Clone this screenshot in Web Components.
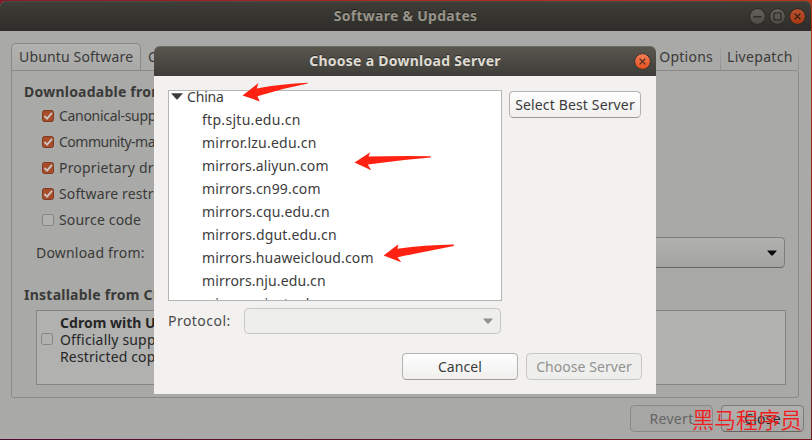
<!DOCTYPE html>
<html lang="en">
<head>
<meta charset="utf-8">
<title>Software &amp; Updates</title>
<style>
html,body{margin:0;padding:0;overflow:hidden}
body{width:812px;height:440px;font-family:"Noto Sans","Open Sans",sans-serif;font-size:14px;background:#7b1a22}
</style>
</head>
<body>
<updates-screen></updates-screen>
<script>
const define = (name, html, ready) => customElements.define(name, class extends HTMLElement {
  constructor() {
    super();
    const t = document.createElement('template');
    t.innerHTML = html;
    this.attachShadow({mode: 'open'}).appendChild(t.content.cloneNode(true));
  }
  connectedCallback() { if (ready) ready(this, this.shadowRoot); }
});

/* A single line of text; "w" is the width of its leading part "ref" (or of all of it). */
define('ui-label', `<style>
:host{display:inline-block;white-space:pre;line-height:20px;flex:none}
:host([bold]){font-weight:700}
</style><span></span>`, (el, root) => {
  const span = root.querySelector('span');
  span.textContent = el.getAttribute('text');
  const w = parseFloat(el.getAttribute('w'));
  if (!w) return;
  const n = (el.getAttribute('ref') || span.textContent).length;
  const r = document.createRange();
  r.setStart(span.firstChild, 0);
  r.setEnd(span.firstChild, n);
  const natural = r.getBoundingClientRect().width;
  if (natural) span.style.letterSpacing = ((w + .7 - natural) / n) + 'px';
});

define('window-button', `<style>
:host{display:block;width:17px;height:17px;flex:none}
svg{display:block}
.x{display:none}
:host([kind=min]) .min,:host([kind=max]) .max,:host([kind=close]) .close,:host([kind=bright]) .bright{display:block}
</style>
<svg width="17" height="17" viewBox="0 0 17 17">
<defs>
<linearGradient id="g" x2="0" y2="1"><stop stop-color="#65635d"/><stop offset="1" stop-color="#4b4a45"/></linearGradient>
<linearGradient id="o" x2="0" y2="1"><stop stop-color="#b9512f"/><stop offset="1" stop-color="#a63a14"/></linearGradient>
<linearGradient id="b" x2="0" y2="1"><stop stop-color="#f37e5a"/><stop offset="1" stop-color="#e3501e"/></linearGradient>
</defs>
<g class="x min"><circle cx="8.5" cy="8.5" r="7.9" fill="url(#g)" stroke="#262521"/><path d="M4.5 8.8h8" stroke="#22211d" stroke-width="1.2"/></g>
<g class="x max"><circle cx="8.5" cy="8.5" r="7.9" fill="url(#g)" stroke="#262521"/><path d="M5 5h7v7H5z" fill="none" stroke="#22211d" stroke-width="1.1"/></g>
<g class="x close"><circle cx="8.5" cy="8.5" r="7.9" fill="url(#o)" stroke="#262521"/><path d="M5.6 5.6l5.8 5.8M11.4 5.6l-5.8 5.8" stroke="#2c1a12" stroke-width="1.2"/></g>
<g class="x bright"><circle cx="8.5" cy="8.5" r="7.9" fill="url(#b)" stroke="#34322d"/><path d="M5.6 5.6l5.8 5.8M11.4 5.6l-5.8 5.8" stroke="#4a2c1c" stroke-width="1.2"/></g>
</svg>`);

define('title-bar', `<style>
:host{display:grid;grid-template-columns:1fr auto 1fr;align-items:center;height:30px;box-sizing:border-box;flex:none;
color:#979489;background:linear-gradient(#403e39,#2d2c28);border-radius:6px 6px 0 0;box-shadow:inset 0 1px #4b4943;text-shadow:0 -1px #1d1c19}
:host([active]){color:#dfdbd2;background:linear-gradient(#5a574e,#3e3d39);box-shadow:inset 0 1px #6c695e;text-shadow:0 -1px #2b2a26}
.t{grid-column:2}
.b{display:flex;gap:3px;justify-content:flex-end;padding-right:5px}
</style><div class="t"><slot></slot></div><div class="b"><slot name="buttons"></slot></div>`);

define('check-box', `<style>
:host{display:block;width:12px;height:12px;flex:none}
svg{display:block}.on{display:none}
:host([on]) .on{display:block}:host([on]) .off{display:none}
</style><svg width="12" height="12" viewBox="0 0 12 12">
<rect class="off" x=".5" y=".5" width="11" height="11" rx="2" fill="#b1b1b0" stroke="#868583"/>
<g class="on"><rect x=".5" y=".5" width="11" height="11" rx="2" fill="#a84c2a" stroke="#7f3b23"/>
<path d="M2.4 6L5.1 8.7L10 2.9" fill="none" stroke="#c9c6c3" stroke-width="1.9"/></g></svg>`);

define('check-row', `<style>
:host{display:flex;align-items:center;height:26px;gap:5px}
</style><check-box></check-box><slot></slot>`, (el, root) => {
  root.querySelector('check-box').toggleAttribute('on', el.hasAttribute('on'));
});

define('push-button', `<style>
:host{display:flex;align-items:center;justify-content:center;box-sizing:border-box;height:27px;flex:none;color:#3c3c3c;
border:1px solid #b4b2af;border-bottom-color:#9c9a97;border-radius:4.5px;background:linear-gradient(#fefefe,#f0efee)}
:host([disabled]){color:#929290;border-color:#c8c7c5;background:#eeeeed}
:host([dim]){color:#2a2a29;border-color:#7c7b79;border-bottom-color:#666563;background:linear-gradient(#b1b1b0,#a6a6a4)}
:host([dim][disabled]){color:#656563;border-color:#8b8a88;background:#a6a6a5}
</style><slot></slot>`);

define('combo-box', `<style>
:host{display:flex;align-items:center;justify-content:flex-end;box-sizing:border-box;height:26px;
border:1px solid #c8c7c5;border-radius:4.5px;background:#eeeeed;padding-right:7px;color:#92918a}
:host([dim]){height:31px;color:#0b0b0b;border-color:#7f7e7c;border-bottom-color:#666563;background:linear-gradient(#b1b1b0,#a3a3a1);padding-right:7px}
svg{display:block}
</style><svg width="10" height="6"><path d="M0 .5H10L6 5.2Q5 6 4 5.2Z" fill="currentColor"/></svg>`);

define('server-list', `<style>
:host{display:block;box-sizing:border-box;width:334px;height:211px;border:1px solid #b7b5b2;background:#fff;overflow:hidden;color:#3c3c3c}
.rows{margin-top:-6px}
.row{height:23px;display:flex;align-items:center;padding-left:33px}
.row.top{padding-left:2px;gap:4px}
</style><div class="rows">
<div class="row top"><svg width="12" height="7"><path d="M0 .3H12L6.6 6.3Q6 6.8 5.4 6.3Z" fill="#3c3c3c"/></svg><ui-label text="China" w="36"></ui-label></div>
<div class="row"><ui-label text="ftp.sjtu.edu.cn" w="98"></ui-label></div>
<div class="row"><ui-label text="mirror.lzu.edu.cn" w="114"></ui-label></div>
<div class="row"><ui-label text="mirrors.aliyun.com" w="126"></ui-label></div>
<div class="row"><ui-label text="mirrors.cn99.com" w="118"></ui-label></div>
<div class="row"><ui-label text="mirrors.cqu.edu.cn" w="127"></ui-label></div>
<div class="row"><ui-label text="mirrors.dgut.edu.cn" w="134"></ui-label></div>
<div class="row"><ui-label text="mirrors.huaweicloud.com" w="171"></ui-label></div>
<div class="row"><ui-label text="mirrors.nju.edu.cn" w="123"></ui-label></div>
<div class="row"><ui-label text="mirrors.njust.edu.cn" w="135"></ui-label></div>
</div>`);

define('server-dialog', `<style>
:host{display:flex;flex-direction:column;width:502px;height:348px;background:#f2f1f0;border-radius:6px 6px 0 0;color:#4a4a4a}
.main{display:flex;gap:7px;padding:14px 0 0 14px;align-items:flex-start}
.main push-button{width:132px;margin-top:1px}
.proto{display:flex;align-items:center;padding:7px 0 0 14px;width:333px}
.proto ui-label{width:76px}
.proto combo-box{flex:1}
.acts{display:flex;gap:8px;justify-content:flex-end;padding:19px 14px 0 0}
.acts push-button{width:116px}
</style>
<title-bar active><ui-label bold text="Choose a Download Server" w="191"></ui-label><window-button slot="buttons" kind="bright"></window-button></title-bar>
<div class="main"><server-list></server-list><push-button><ui-label text="Select Best Server" w="119"></ui-label></push-button></div>
<div class="proto"><ui-label text="Protocol:" w="62"></ui-label><combo-box></combo-box></div>
<div class="acts"><push-button><ui-label text="Cancel" w="43.5"></ui-label></push-button><push-button disabled><ui-label text="Choose Server" w="95"></ui-label></push-button></div>`);

define('tab-strip', `<style>
:host{display:flex;height:27px;align-items:stretch}
.tab{display:flex;align-items:center;box-sizing:border-box}
.sel{width:130px;border:1px solid #8a8987;border-bottom:0;border-radius:5px 5px 0 0;padding-left:7px;background:linear-gradient(#b1b1b0,#a9a9a7)}
.other{padding-left:7px}
.opt{margin-left:auto;padding-right:7px}
.live{width:79px;padding-left:6px;border:solid;border-width:0 1px;border-image:linear-gradient(#a9a9a7,#929190) 1}
</style>
<div class="tab sel"><ui-label text="Ubuntu Software" w="113.5"></ui-label></div>
<div class="tab other"><ui-label text="Other"></ui-label></div>
<div class="tab opt"><ui-label text="Options" w="53"></ui-label></div>
<div class="tab live"><ui-label text="Livepatch" w="65"></ui-label></div>`);

define('settings-page', `<style>
:host{display:flex;flex-direction:column;box-sizing:border-box;height:328px;border:1px solid #8a8987;border-radius:0 3px 3px 3px;padding:11px 12px 0}
.checks{padding:1px 0 0 18px}
.from{display:grid;grid-template-columns:124px 1fr;align-items:center;padding:4px 1px 0 12px;height:31px}
h3{all:unset;display:block;height:20px}
.inst{margin-top:17px}
.cd{margin:5px 0 0 12px;box-sizing:border-box;height:75px;border:1px solid #858482;background:#b1b1b0;display:flex;gap:7px;padding:3px 0 0 4px;color:#262626}
.cd check-box{margin-top:19px}
.lines{display:flex;flex-direction:column}
.lines ui-label{line-height:17px}
</style>
<h3><ui-label bold text="Downloadable from" ref="Downloadable fro" w="126.5"></ui-label></h3>
<div class="checks">
<check-row on><ui-label text="Canonical-supported" ref="Canonical-sup" w="88"></ui-label></check-row>
<check-row on><ui-label text="Community-maintained" ref="Community-m" w="88"></ui-label></check-row>
<check-row on><ui-label text="Proprietary drivers" ref="Proprietary dr" w="94"></ui-label></check-row>
<check-row on><ui-label text="Software restricted" ref="Software restr" w="94"></ui-label></check-row>
<check-row><ui-label text="Source code" w="81.5"></ui-label></check-row>
</div>
<div class="from"><ui-label text="Download from:" w="108"></ui-label><combo-box dim></combo-box></div>
<h3 class="inst"><ui-label bold text="Installable from CD" ref="Installable from C" w="128"></ui-label></h3>
<div class="cd"><check-box></check-box><div class="lines">
<ui-label bold text="Cdrom with Ubuntu" ref="Cdrom with U" w="95"></ui-label>
<ui-label text="Officially supported" ref="Officially supp" w="95"></ui-label>
<ui-label text="Restricted copyright" ref="Restricted cop" w="94.5"></ui-label></div></div>`);

define('updates-window', `<style>
:host{display:flex;flex-direction:column;box-sizing:border-box;width:811px;height:438px;background:#a9a9a7;color:#3a3a39;border-radius:6px 6px 0 0}
.body{padding:12px 12px 0 11px}
.foot{display:flex;gap:8px;justify-content:flex-end;padding:7px 7px 0 0}
.foot push-button{width:83px}
</style>
<title-bar><ui-label bold text="Software &amp; Updates" w="143"></ui-label>
<window-button slot="buttons" kind="min"></window-button><window-button slot="buttons" kind="max"></window-button><window-button slot="buttons" kind="close"></window-button></title-bar>
<div class="body"><tab-strip></tab-strip><settings-page></settings-page></div>
<div class="foot"><push-button dim disabled><ui-label text="Revert" w="43.5"></ui-label></push-button><push-button dim><ui-label text="Close" w="36"></ui-label></push-button></div>`);

define('red-arrows', `<style>:host{display:block;pointer-events:none}svg{display:block}</style>
<svg width="812" height="440" fill="#ff2212">
<path d="M242.5 95.5L258.4 83L256.8 88.4Q282 83.8 307.7 82.7V83.6Q282 88.5 257.4 96.3L259.8 101.4Z"/>
<path d="M354.5 162.6L370.3 152.2L368.5 156.6Q400 155.8 430.8 156.3V157.6Q400 160 367.8 164.6L371.2 170.2Z"/>
<path d="M383.6 255.6L398.4 244.2L397.4 248.8Q425 245 453.8 244.5V246Q426 251.5 397.6 257.2L401.2 262.2Z"/>
</svg>`);

define('water-mark', `<style>:host{display:block;font:350 22px/22px "Noto Sans CJK SC",sans-serif;color:#f21d1d;white-space:nowrap}</style><slot></slot>`);

define('updates-screen', `<style>
:host{display:block;position:relative;width:812px;height:440px;box-sizing:border-box;padding-top:1px;overflow:hidden;
background:linear-gradient(90deg,#861a2b,#a82720 45%,#b8361a) 0 0/100% 12px no-repeat,linear-gradient(90deg,#4d0b2f,#7b1a22) 0 100%/100% 2px no-repeat,linear-gradient(#b43118,#791a22)}
server-dialog{position:absolute;left:154px;top:46px}
red-arrows{position:absolute;left:0;top:0}
water-mark{position:absolute;left:692px;top:407px}
</style>
<updates-window></updates-window><server-dialog></server-dialog><red-arrows></red-arrows><water-mark>黑马程序员</water-mark>`);
</script>
</body>
</html>
